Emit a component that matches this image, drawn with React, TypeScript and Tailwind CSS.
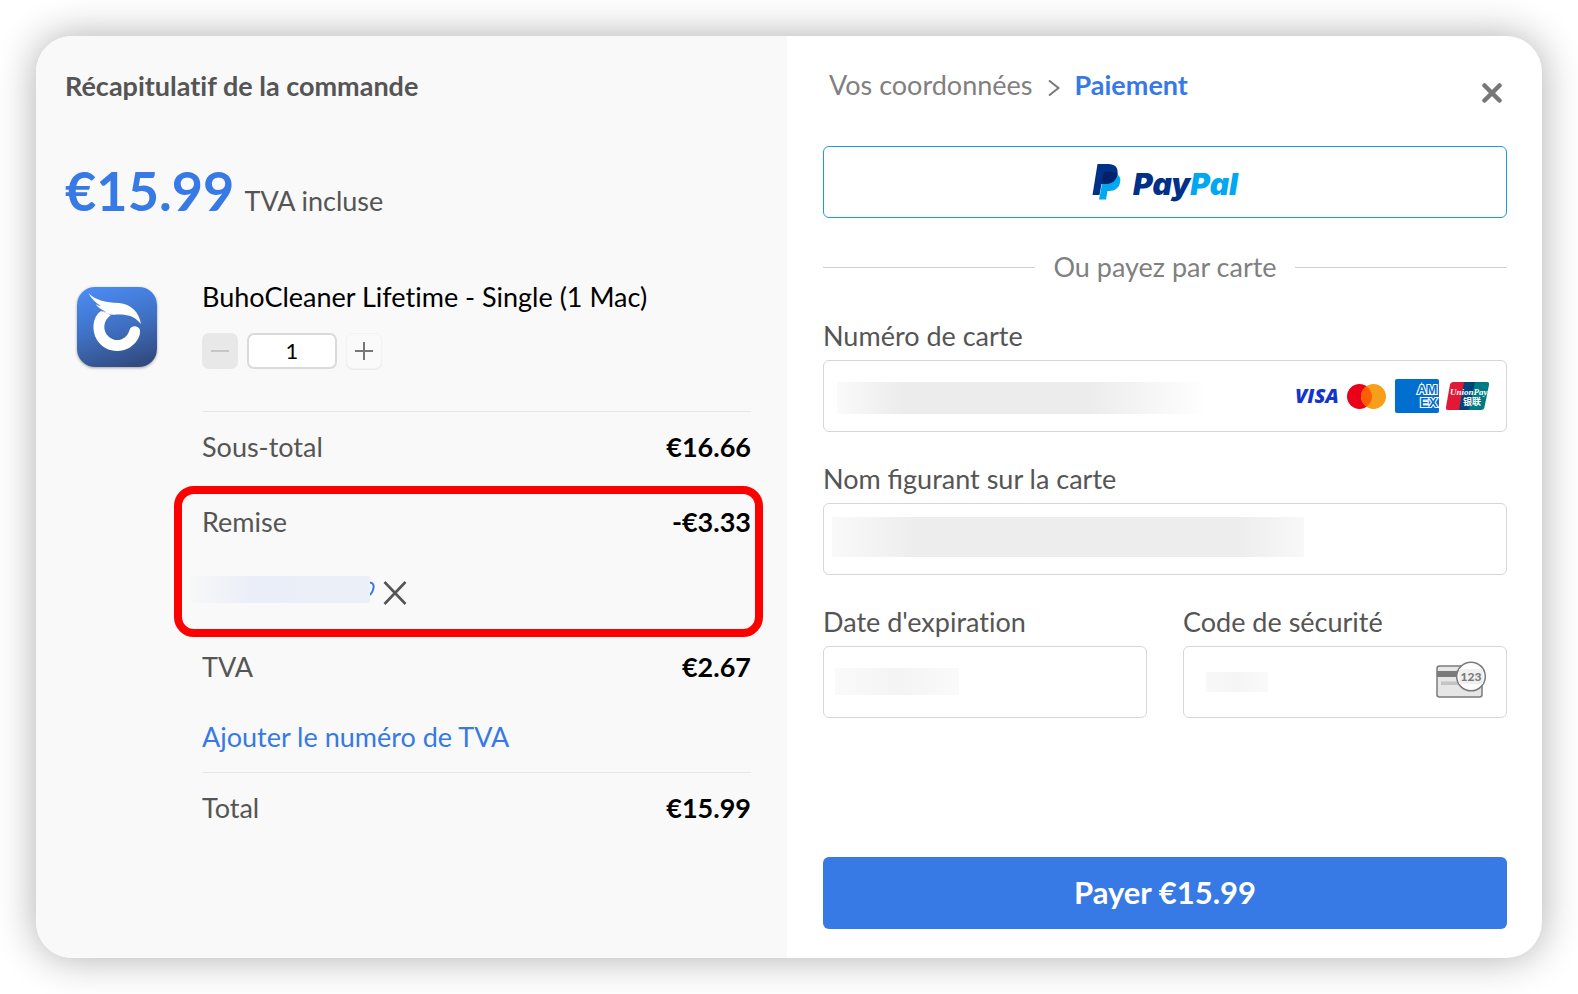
import type { ReactNode } from "react";

function AppLogo() {
  return (
    <svg viewBox="0 0 80 80" className="mt-2 h-20 w-20 shrink-0 rounded-[18px] shadow-[0_1px_3px_rgba(0,0,0,0.35)]" aria-hidden="true">
      <defs>
        <linearGradient id="logoBg" x1="0.35" y1="0" x2="0.65" y2="1">
          <stop offset="0" stopColor="#4a89f0" />
          <stop offset="0.5" stopColor="#3f70c2" />
          <stop offset="1" stopColor="#324b80" />
        </linearGradient>
      </defs>
      <rect width="80" height="80" fill="url(#logoBg)" />
      <path d="M24 24 C15 30 14.500 44 20 53 C27 64 41 67 52 61 C59 57 64 49 63 43 C61 38 54 38 52.500 43 C50 53 39 56 32 50 C25 44 26 33 34 28 Z" fill="#fff" />
      <path d="M11.500 6 C18 13 28 15.500 42 16 C54 17 62 25 64 37 C57 28 48 27 39 27.500 C34 28.500 29 26 24 24 L29 25 C24 22.500 20.500 20 18.500 17 C20 18 22 19 24 19 C18 15.500 14 11 11.500 6 Z" fill="#fff" />
    </svg>
  );
}

function PayPalLogo() {
  return (
    <span className="flex items-center gap-3">
      <svg width="29" height="36" viewBox="0 0 29 36" aria-hidden="true">
        <path d="M12 10 H25 C28 12 29 15 28 18.500 C27 24 23 27 17 27 H15.500 L14 35.500 H7 Z" fill="#00a8f0" />
        <path d="M5.500 0 H16 C23 0 26.500 3.500 25.500 10 C24.500 16.500 20 20 13 20 H9.500 L7.500 31 H0.500 Z" fill="#003087" />
        <path d="M12 8 C17 7.500 22 7.500 25.500 9.500 C24.500 16.500 20 20 13 20 H9.800 Z" fill="#012169" />
      </svg>
      <span className="mt-1 font-['Inter',sans-serif] text-[30px] leading-9 font-black text-[#003087] italic">
        Pay<span className="text-[#00a8f0]">Pal</span>
      </span>
    </span>
  );
}

function CardBrands() {
  return (
    <svg width="194" height="36" viewBox="0 0 194 36" role="img" aria-label="Visa, Mastercard, American Express, UnionPay">
      <text x="0" y="25" fontFamily="'Open Sans', sans-serif" fontWeight="800" fontStyle="italic" fontSize="20" fill="#1434cb">VISA</text>
      <circle cx="64.500" cy="18.500" r="12.500" fill="#eb001b" />
      <circle cx="78.500" cy="18.500" r="12.500" fill="#f79e1b" />
      <path d="M71.500 8.200 A12.500 12.500 0 0 1 71.500 28.800 A12.500 12.500 0 0 1 71.500 8.200" fill="#ff5f00" />
      <svg x="100" y="1" width="44" height="34" viewBox="0 0 44 34">
        <rect width="44" height="34" rx="2" fill="#016fd0" />
        <g fill="#016fd0" stroke="#fff" strokeWidth="2.200" paintOrder="stroke" fontFamily="'Liberation Sans', sans-serif" fontWeight="700" fontSize="13">
          <text x="22" y="15">AM</text>
          <text x="25" y="28">EX</text>
        </g>
      </svg>
      <g>
        <path d="M158 4 H171 L165 32 H153 Q150.500 32 151 29 L155 6.500 Q155.500 4 158 4" fill="#e21836" />
        <path d="M169 4 H182 L176 32 H164 Z" fill="#00447c" />
        <path d="M180 4 H192 Q194.500 4 194 7 L189.500 29 Q189 32 186 32 H174 Z" fill="#007b84" />
        <text x="155" y="17" fontFamily="'Liberation Serif', serif" fontStyle="italic" fontWeight="700" fontSize="9" fill="#fff">UnionPay</text>
        <text x="168" y="27" fontFamily="'Noto Sans CJK SC', sans-serif" fontWeight="700" fontSize="9" fill="#fff">银联</text>
      </g>
    </svg>
  );
}

function SecurityCodeIcon() {
  return (
    <svg width="50" height="38" viewBox="0 0 50 38" aria-hidden="true">
      <rect x="1" y="5" width="45" height="31" rx="2.500" fill="#e6e6e6" stroke="#7b7b7b" strokeWidth="1.500" />
      <rect x="1" y="10" width="45" height="6" fill="#7b7b7b" />
      <rect x="5" y="20.500" width="18" height="3.500" fill="#c4c4c4" />
      <circle cx="35" cy="15.500" r="14.300" fill="#fff" stroke="#7b7b7b" strokeWidth="1.500" />
      <rect x="23" y="8" width="24" height="15" fill="#f0f0f0" />
      <text x="35" y="19.500" textAnchor="middle" fontSize="12" fontWeight="900" fill="#7b7b7b">123</text>
    </svg>
  );
}

function SummaryRow({ label, amount }: { label: string; amount: string }) {
  return (
    <div className="flex justify-between">
      <dt>{label}</dt>
      <dd className="font-bold text-black">{amount}</dd>
    </div>
  );
}

type FieldProps = { id: string; label: string; labelStyle?: string; mask: string; children?: ReactNode };

function Field({ id, label, labelStyle = "", mask, children }: FieldProps) {
  return (
    <div className="flex-1">
      <label htmlFor={id} className={`block ${labelStyle}`}>{label}</label>
      <div className="relative mt-1.5">
        <input id={id} type="text" className="block h-[72px] w-full rounded-[6px] border border-[#d6d6d6] bg-white px-4 outline-none focus:border-[#3779e5]" />
        <span className={`pointer-events-none absolute ${mask}`} />
        {children}
      </div>
    </div>
  );
}

export default function App() {
  return (
    <main className="flex min-h-screen bg-white p-9 font-['Lato',sans-serif] text-[27px] leading-9 text-[#555]">
      <div className="grid flex-1 grid-cols-[751fr_755fr] overflow-hidden rounded-[36px] bg-white shadow-[0_0_40px_rgba(0,0,0,0.32)]">
        <section className="bg-[#f9f9f9] pt-8 pr-9 pl-[29px]">
          <h1 className="font-bold [font-variant-ligatures:none]">Récapitulatif de la commande</h1>
          <p className="mt-[55px] flex items-baseline gap-2.5">
            <strong className="text-[54px] leading-[64px] text-[#3779e5]">€15.99</strong>
            TVA incluse
          </p>
          <div className="mt-14 flex gap-[45px] pl-3">
            <AppLogo />
            <div className="flex-1">
              <h2 className="text-black [font-variant-ligatures:none]">BuhoCleaner Lifetime - Single (1 Mac)</h2>
              <div className="mt-[18px] flex gap-[9px]">
                <button type="button" disabled aria-label="Diminuer la quantité" className="flex h-9 w-9 items-center justify-center rounded-[7px] bg-[#e8e8e8]">
                  <span className="h-0.5 w-[18px] bg-[#c6c6c6]" />
                </button>
                <input aria-label="Quantité" defaultValue="1" className="h-9 w-[90px] rounded-[7px] border-2 border-[#dadada] bg-white text-center text-[22px] text-black outline-none" />
                <button type="button" aria-label="Augmenter la quantité" className="flex h-9 w-9 items-center justify-center rounded-[7px] border border-[#f3f3f3] bg-[#fafafa] shadow-[0_1px_1px_rgba(0,0,0,0.06)]">
                  <svg width="18" height="18" viewBox="0 0 18 18" aria-hidden="true">
                    <path d="M9 0 V18 M0 9 H18" stroke="#777" strokeWidth="2" />
                  </svg>
                </button>
              </div>
              <dl className="mt-[42px] border-t border-[#e6e6e6] pt-[17px]">
                <SummaryRow label="Sous-total" amount="€16.66" />
                <div className="mt-[21px] -mr-3 -ml-7 rounded-[20px] border-8 border-[#f00] pt-2.5 pr-1 pb-[18px] pl-5">
                  <SummaryRow label="Remise" amount="-€3.33" />
                  <div className="mt-[35px] -ml-3 flex h-9 items-center gap-3">
                    <span className="mb-2 flex h-[27px] items-center">
                      <span className="h-[27px] w-[180px] bg-linear-to-r from-[#f8f8f8] via-[#eaeef8] via-35% to-[#ebeff7]" />
                      <svg width="5" height="16" viewBox="0 0 5 16" aria-hidden="true">
                        <path d="M0 1.500 C3 2 4 4 3.500 7 C3 10 2 12 0 14" fill="none" stroke="#3779e5" strokeWidth="2" />
                      </svg>
                    </span>
                    <button type="button" aria-label="Retirer la remise" className="-ml-1">
                      <svg width="24" height="24" viewBox="0 0 24 24" aria-hidden="true">
                        <path d="M1.500 1 L22.500 23 M22.500 1 L1.500 23" stroke="#555" strokeWidth="2.600" />
                      </svg>
                    </button>
                  </div>
                </div>
                <div className="mt-3">
                  <SummaryRow label="TVA" amount="€2.67" />
                </div>
                <a href="#tva" className="mt-[34px] block text-[#3779e5]">Ajouter le numéro de TVA</a>
                <div className="mt-[17px] border-t border-[#e6e6e6] pt-[17px]">
                  <SummaryRow label="Total" amount="€15.99" />
                </div>
              </dl>
            </div>
          </div>
        </section>

        <section className="flex flex-col pt-[31px] pr-[35px] pb-[29px] pl-9">
          <header className="flex items-start justify-between pr-[5px] pl-1.5">
            <nav className="flex items-center gap-[15px]">
              <a href="#coordonnees" className="text-[#808080]">Vos coordonnées</a>
              <svg width="12" height="18" viewBox="0 0 12 18" className="mt-1.5" aria-hidden="true">
                <path d="M1 1.500 L10.500 9 L1 16.500" fill="none" stroke="#777" strokeWidth="2" />
              </svg>
              <span className="font-bold text-[#3779e5]">Paiement</span>
            </nav>
            <button type="button" aria-label="Fermer" className="mt-4">
              <svg width="20" height="20" viewBox="0 0 20 20" aria-hidden="true">
                <path d="M2.500 2.500 L17.500 17.500 M17.500 2.500 L2.500 17.500" stroke="#777" strokeWidth="4.500" strokeLinecap="round" />
              </svg>
            </button>
          </header>
          <button type="button" aria-label="PayPal" className="mt-[43px] flex h-[72px] items-center justify-center rounded-[6px] border border-[#1e9bd9]">
            <PayPalLogo />
          </button>
          <div className="mt-[31px] flex items-center gap-[18px] text-[#808080]">
            <span className="h-px flex-1 bg-[#d0d0d0]" />
            Ou payez par carte
            <span className="h-px flex-1 bg-[#d0d0d0]" />
          </div>
          <form className="mt-[33px] flex flex-col gap-[29px]">
            <Field id="card" label="Numéro de carte" mask="top-[22px] left-[14px] h-8 w-[370px] bg-[linear-gradient(90deg,#fafafa,#ececec_18%,#ececec_68%,#fff)]">
              <span className="pointer-events-none absolute top-[18px] right-[18px]"><CardBrands /></span>
            </Field>
            <Field id="name" label="Nom figurant sur la carte" mask="top-[14px] left-[9px] h-10 w-[472px] bg-[linear-gradient(90deg,#f9f9f9,#ededed_18%,#ededed_86%,#f8f8f8)]" />
            <div className="flex gap-9">
              <Field id="expiry" label="Date d'expiration" labelStyle="[font-variant-ligatures:none]" mask="top-[22px] left-3 h-[27px] w-[124px] bg-linear-to-r from-[#fafafa] via-[#f4f4f4] to-[#fafafa]" />
              <Field id="cvc" label="Code de sécurité" mask="top-[26px] left-[23px] h-5 w-[62px] bg-linear-to-r from-[#f8f8f8] via-[#f5f5f5] to-[#fafafa]">
                <span className="pointer-events-none absolute top-[15px] right-[21px]"><SecurityCodeIcon /></span>
              </Field>
            </div>
          </form>
          <button type="button" className="mt-auto h-[72px] rounded-[6px] bg-[#3779e5] pb-0.5 text-[31px] font-bold text-white">
            Payer €15.99
          </button>
        </section>
      </div>
    </main>
  );
}
